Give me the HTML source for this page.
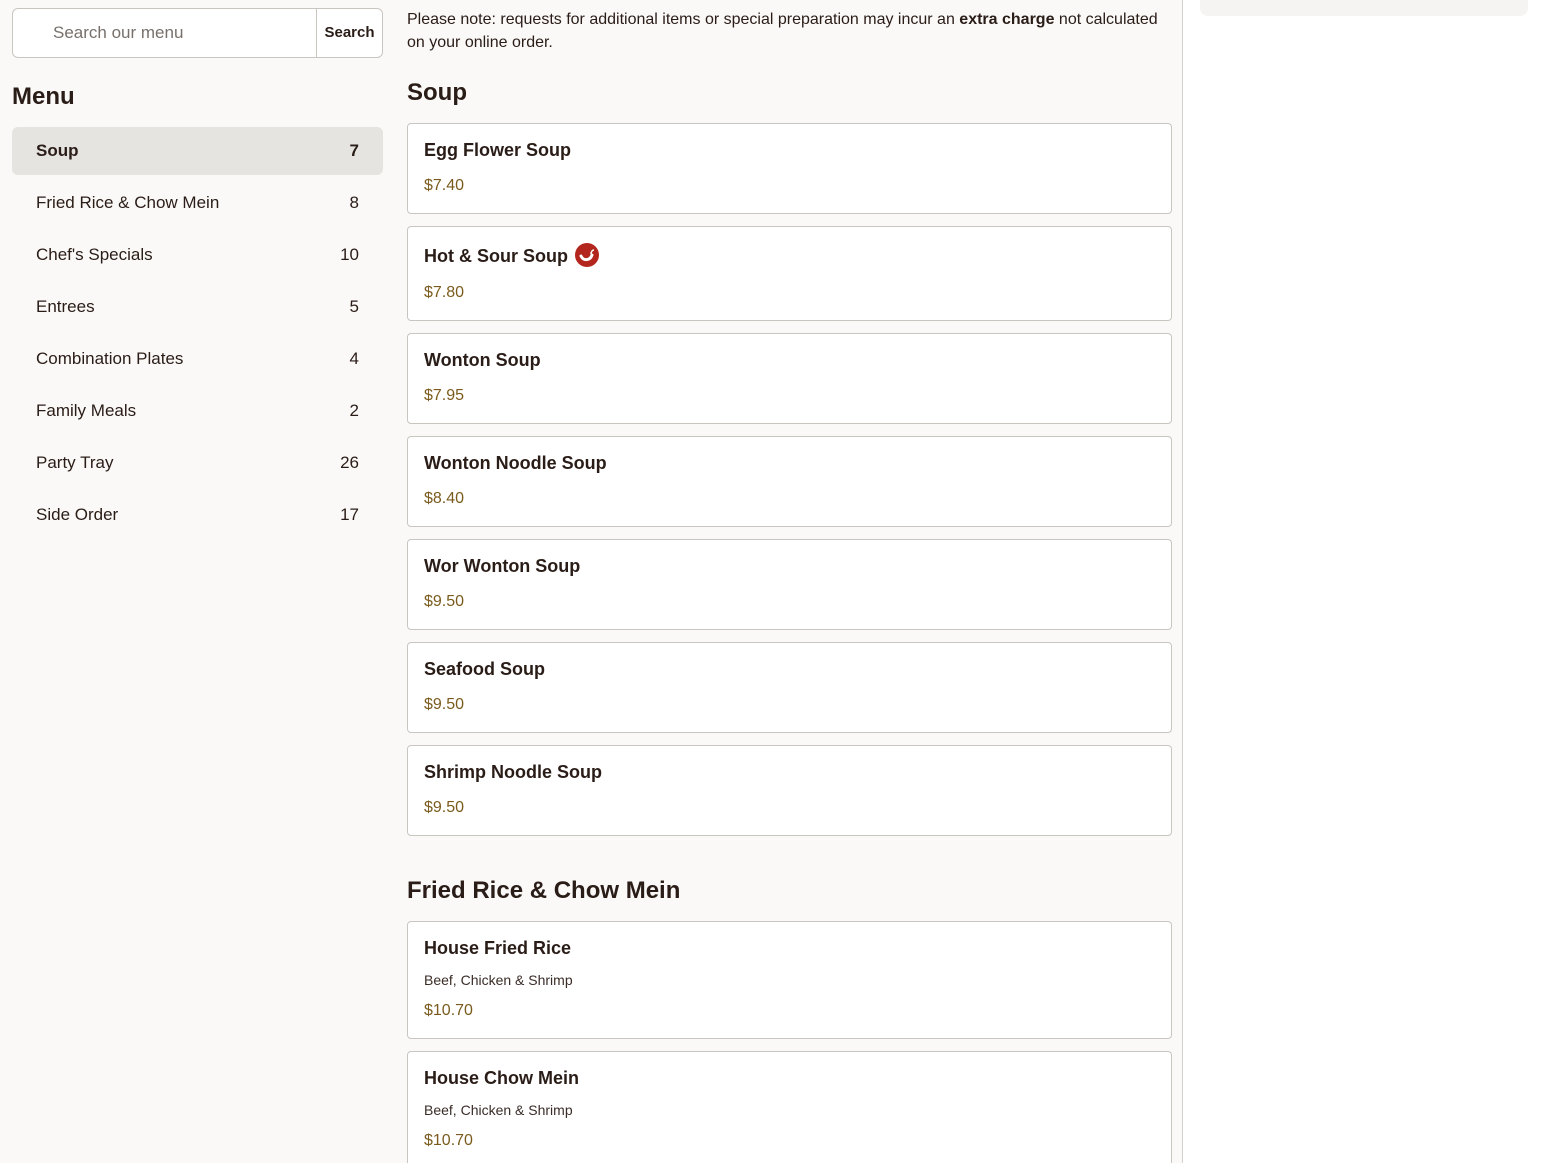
<!DOCTYPE html>
<html><head><meta charset="utf-8"><style>
*{box-sizing:border-box;margin:0;padding:0}
html,body{width:1544px;height:1163px;overflow:hidden}
body{background:#fff;font-family:"Liberation Sans",sans-serif;color:#2a1c17;position:relative}
.left{position:absolute;left:0;top:0;width:1183px;height:1163px;background:#faf9f7;border-right:1px solid #d4d0cc}
.abs{position:absolute}
.search{left:12px;top:8px;width:371px;height:50px;border:1px solid #c9c5c1;border-radius:6px;background:#fff}
.search .ph{position:absolute;left:40px;top:14px;font-size:17px;color:#77706b}
.search .btn{position:absolute;right:0;top:0;width:66px;height:48px;border-left:1px solid #c9c5c1;font-size:15px;font-weight:bold;text-align:center;line-height:48px}
.cat{position:absolute;left:12px;width:371px;height:48px;border-radius:6px;font-size:17px;line-height:48px;padding:0 24px}
.cat span{float:right}
.cat.sel{background:#e6e4e1;font-weight:bold}
.card{position:absolute;left:407px;width:765px;border:1px solid #c9c5c1;border-radius:4px;background:#fff;padding:0 16px}
.card .n{position:absolute;left:16px;top:16px;font-size:18px;font-weight:bold}
.card .d{position:absolute;left:16px;top:50px;font-size:14px;color:#3a2c27}
.card .p{position:absolute;left:16px;font-size:16px;color:#7a5b1d}
h2{position:absolute;left:407px;font-size:24px;font-weight:bold}
</style></head><body>
<div class="left"></div>
<div class="abs search"><div class="ph">Search our menu</div><div class="btn">Search</div></div>
<div class="abs" style="left:12px;top:83px;font-size:24px;font-weight:bold">Menu</div>
<div class="cat sel" style="top:127px">Soup<span>7</span></div>
<div class="cat" style="top:179px">Fried Rice &amp; Chow Mein<span>8</span></div>
<div class="cat" style="top:231px">Chef's Specials<span>10</span></div>
<div class="cat" style="top:283px">Entrees<span>5</span></div>
<div class="cat" style="top:335px">Combination Plates<span>4</span></div>
<div class="cat" style="top:387px">Family Meals<span>2</span></div>
<div class="cat" style="top:439px">Party Tray<span>26</span></div>
<div class="cat" style="top:491px">Side Order<span>17</span></div>
<div class="abs" style="left:407px;top:8px;width:765px;font-size:16px;line-height:23px">Please note: requests for additional items or special preparation may incur an <b>extra charge</b> not calculated on your online order.</div>
<h2 style="top:79px">Soup</h2>
<div class="card" style="top:123px;height:91px"><div class="n">Egg Flower Soup</div><div class="p" style="top:53px">$7.40</div></div>
<div class="card" style="top:226px;height:95px"><div class="n">Hot &amp; Sour Soup <svg width="24" height="24" viewBox="0 0 24 24" style="vertical-align:-5px;margin-left:2px"><circle cx="12" cy="12" r="12" fill="#b3261e"/><path d="M6 13c2 5 9 5 11-1" stroke="#fff" stroke-width="3" fill="none" stroke-linecap="round"/><path d="M16 11c0-3 2-4 3-4" stroke="#fff" stroke-width="1.5" fill="none"/></svg></div><div class="p" style="top:57px">$7.80</div></div>
<div class="card" style="top:333px;height:91px"><div class="n">Wonton Soup</div><div class="p" style="top:53px">$7.95</div></div>
<div class="card" style="top:436px;height:91px"><div class="n">Wonton Noodle Soup</div><div class="p" style="top:53px">$8.40</div></div>
<div class="card" style="top:539px;height:91px"><div class="n">Wor Wonton Soup</div><div class="p" style="top:53px">$9.50</div></div>
<div class="card" style="top:642px;height:91px"><div class="n">Seafood Soup</div><div class="p" style="top:53px">$9.50</div></div>
<div class="card" style="top:745px;height:91px"><div class="n">Shrimp Noodle Soup</div><div class="p" style="top:53px">$9.50</div></div>
<h2 style="top:877px">Fried Rice &amp; Chow Mein</h2>
<div class="card" style="top:921px;height:118px"><div class="n">House Fried Rice</div><div class="d">Beef, Chicken &amp; Shrimp</div><div class="p" style="top:80px">$10.70</div></div>
<div class="card" style="top:1051px;height:112px;border-bottom:none;border-radius:4px 4px 0 0"><div class="n">House Chow Mein</div><div class="d">Beef, Chicken &amp; Shrimp</div><div class="p" style="top:80px">$10.70</div></div>
<div class="abs" style="left:1200px;top:-10px;width:328px;height:26px;background:#f5f4f2;border-radius:8px"></div>
</body></html>
